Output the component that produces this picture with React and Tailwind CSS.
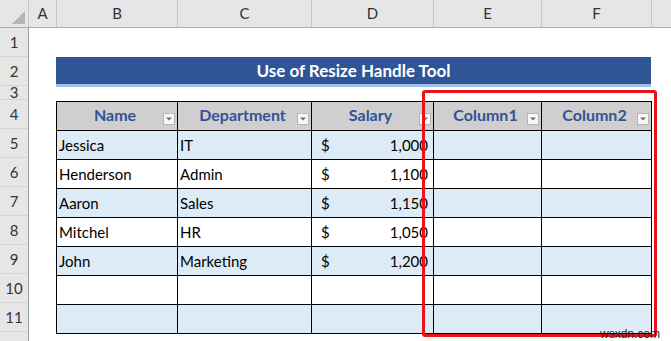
import React from 'react';

const cols = [
  { label: 'A', w: 'w-[28px]' },
  { label: 'B', w: 'w-[121px]' },
  { label: 'C', w: 'w-[134px]' },
  { label: 'D', w: 'w-[122px]' },
  { label: 'E', w: 'w-[108px]' },
  { label: 'F', w: 'w-[110px]' },
];

const rowLabels = [
  { n: '1', h: 'h-[29px]' },
  { n: '2', h: 'h-[29px]' },
  { n: '3', h: 'h-[14px]' },
  { n: '4', h: 'h-[29px]' },
  { n: '5', h: 'h-[29px]' },
  { n: '6', h: 'h-[29px]' },
  { n: '7', h: 'h-[29px]' },
  { n: '8', h: 'h-[29px]' },
  { n: '9', h: 'h-[29px]' },
  { n: '10', h: 'h-[29px]' },
  { n: '11', h: 'h-[29px]' },
  { n: '', h: 'h-[20px]' },
];

const people = [
  { name: 'Jessica', dept: 'IT', salary: '1,000' },
  { name: 'Henderson', dept: 'Admin', salary: '1,100' },
  { name: 'Aaron', dept: 'Sales', salary: '1,150' },
  { name: 'Mitchel', dept: 'HR', salary: '1,050' },
  { name: 'John', dept: 'Marketing', salary: '1,200' },
  { name: '', dept: '', salary: '' },
  { name: '', dept: '', salary: '' },
];

const Dropdown = () => (
  <span className="absolute right-[2px] bottom-[5px] w-[12px] h-[12px] bg-[#f7f7f7] border border-[#b5b5b5] flex items-center justify-center">
    <svg width="6" height="4" viewBox="0 0 6 4">
      <path d="M0 0.5 L6 0.5 L3 3.5 Z" fill="#6b6b6b" />
    </svg>
  </span>
);

const HeadCell = ({ children, w }) => (
  <th className={`${w} relative h-[29px] p-0 border border-black bg-[#d0cece] text-[#305496] font-bold text-[16px] text-center`}>
    <span className="relative -left-[2px] -top-[1px]">{children}</span>
    <Dropdown />
  </th>
);

const App = () => {
  return (
    <div className="relative w-[671px] h-[341px] overflow-hidden bg-white font-['Lato','Liberation_Sans',sans-serif] text-[15px] text-black">
      {/* column letters */}
      <div className="flex h-[28px] bg-[#e6e6e6] border-b border-[#ababab]">
        <div className="w-[29px] h-full relative border-r border-[#c6c6c6]">
          <svg className="absolute right-[3px] bottom-[3px]" width="13" height="13" viewBox="0 0 13 13">
            <path d="M13 0 L13 13 L0 13 Z" fill="#b5b5b5" />
          </svg>
        </div>
        {cols.map((c) => (
          <div key={c.label} className={`${c.w} h-full flex items-center justify-center border-r border-[#c6c6c6] text-[#333] text-[15px]`}>
            {c.label}
          </div>
        ))}
        <div className="flex-1" />
      </div>

      <div className="flex">
        {/* row numbers */}
        <div className="w-[29px] bg-[#e6e6e6] border-r border-[#9e9e9e] flex flex-col">
          {rowLabels.map((r, i) => (
            <div key={i} className={`${r.h} shrink-0 flex items-center justify-center border-b border-[#d4d4d4] text-[#333] text-[15px] leading-none overflow-hidden`}>
              {r.n}
            </div>
          ))}
        </div>

        {/* sheet */}
        <div className="flex-1 pl-[27px] pt-[29px]">
          <div className="w-[595px] h-[27px] bg-[#2f5597] flex items-center justify-center text-white font-bold text-[17px]">
            Use of Resize Handle Tool
          </div>
          <div className="w-[595px] h-[3px] bg-[#9bc2e6]" />
          <div className="h-[14px]" />
          <table className="border-collapse table-fixed w-[596px]">
            <thead>
              <tr>
                <HeadCell w="w-[121px]">Name</HeadCell>
                <HeadCell w="w-[134px]">Department</HeadCell>
                <HeadCell w="w-[122px]">Salary</HeadCell>
                <HeadCell w="w-[108px]">Column1</HeadCell>
                <HeadCell w="w-[110px]">Column2</HeadCell>
              </tr>
            </thead>
            <tbody>
              {people.map((p, i) => (
                <tr key={i} className={i % 2 === 0 ? 'bg-[#ddebf7]' : 'bg-white'}>
                  <td className="h-[29px] p-0 pl-[2px] border border-black">{p.name}</td>
                  <td className="h-[29px] p-0 pl-[2px] border border-black">{p.dept}</td>
                  <td className="h-[29px] p-0 pl-[6px] pr-[5px] border border-black">
                    {p.salary && (
                      <div className="flex justify-between pl-[3px]">
                        <span>$</span>
                        <span>{p.salary}</span>
                      </div>
                    )}
                  </td>
                  <td className="h-[29px] p-0 border border-black" />
                  <td className="h-[29px] p-0 border border-black" />
                </tr>
              ))}
            </tbody>
          </table>
        </div>
      </div>

      {/* resize handle highlight */}
      <div className="absolute left-[422px] top-[90px] w-[235px] h-[247px] border-[3px] border-[#e8141b] rounded-[3px]" />
      <div className="absolute left-[600px] top-[327px] text-[12px] leading-[14px] text-[#2a2a2a] font-['Liberation_Sans',sans-serif]">
        wsxdn.com
      </div>
    </div>
  );
};

export default App;
